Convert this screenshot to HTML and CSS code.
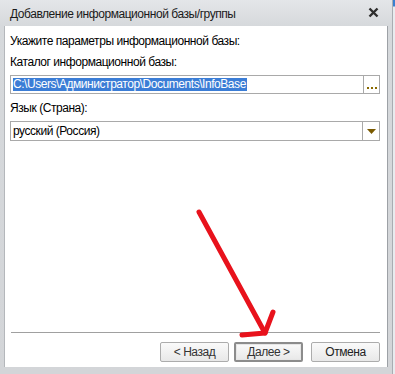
FILE: index.html
```html
<!DOCTYPE html>
<html lang="ru">
<head>
<meta charset="utf-8">
<link rel="stylesheet" href="styles.css">
</head>
<body>
<div class="screen">
  <div class="window">
    <div class="titlebar">
      <span class="title">Добавление информационной базы/группы</span>
      <svg class="close" width="11" height="11" viewBox="0 0 11 11"><path d="M1.5 1.5 L9.5 9.5 M9.5 1.5 L1.5 9.5" stroke="#2e2e2e" stroke-width="2.4"/></svg>
    </div>
    <div class="client">
      <div class="label first">Укажите параметры информационной базы:</div>
      <div class="label">Каталог информационной базы:</div>
      <div class="field">
        <div class="value"><span class="sel">C:\Users\Администратор\Documents\InfoBase</span></div>
        <div class="fbtn dots"><span></span><span></span><span></span></div>
      </div>
      <div class="label">Язык (Страна):</div>
      <div class="field combo">
        <div class="value">русский (Россия)</div>
        <div class="fbtn"><svg width="9" height="5" viewBox="0 0 9 5"><path d="M0 0 H9 L4.5 5 Z" fill="#7a5a00"/></svg></div>
      </div>
      <div class="spacer"></div>
      <div class="sep"></div>
      <div class="buttons">
        <div class="btn">&lt; Назад</div>
        <div class="btn default">Далее &gt;</div>
        <div class="btn cancel">Отмена</div>
      </div>
    </div>
  </div>
  <div class="side"></div>
  <svg class="arrow" width="395" height="374" viewBox="0 0 395 374">
    <g stroke="#e8121c" stroke-width="5" stroke-linecap="round" stroke-linejoin="round" fill="none">
      <path d="M199 212 L265 333"/>
      <path d="M273 312 L265 333 L242 335"/>
    </g>
  </svg>
</div>
</body>
</html>
```
FILE: styles.css
```css
html, body {
  margin: 0;
  padding: 0;
}
body {
  width: 395px;
  height: 374px;
  overflow: hidden;
  font-family: "Liberation Sans", Arial, sans-serif;
  font-size: 12px;
  letter-spacing: -0.45px;
  color: #000;
}
.screen {
  position: relative;
  display: flex;
  width: 395px;
  height: 374px;
  background: #c9cdd2;
}
.window {
  width: 393px;
  height: 374px;
  box-sizing: border-box;
  padding: 0 4px 7px 5px;
  display: flex;
  flex-direction: column;
  background: linear-gradient(to bottom, #e4e6e9 0px, #d6d9dc 26px, #d3d5d8 100%);
  border-right: 1px solid #a9adb2;
}
.side {
  flex: 1;
  background: linear-gradient(to bottom, #3a7fd0 0px, #3a7fd0 6px, #e9ebee 7px, #e9ebee 100%);
}
.titlebar {
  height: 26px;
  display: flex;
  align-items: center;
  justify-content: space-between;
  padding: 0 9px 0 5px;
  box-sizing: border-box;
}
.title {
  font-size: 12px;
  color: #1a1a1a;
  margin-top: 1px;
}
.close {
  margin-top: -1px;
}
.client {
  flex: 1;
  background: #fff;
  display: flex;
  flex-direction: column;
  padding: 0 7px 5px 5px;
  border-left: 1px solid #b4b7bb;
  margin-left: -1px;
  border-right: 1px solid #9da1a6;
}
.label {
  height: 14px;
  line-height: 14px;
  margin-top: 7px;
  white-space: nowrap;
}
.label.first {
  margin-top: 8px;
}
.field {
  margin-top: 6px;
  height: 19px;
  box-sizing: border-box;
  border: 1px solid #a9a9a9;
  display: flex;
}
.field.combo {
  height: 20px;
}
.value {
  flex: 1;
  display: flex;
  align-items: center;
  padding-left: 2px;
  white-space: nowrap;
  overflow: hidden;
}
.sel {
  background: #3b7dd6;
  color: #fff;
  line-height: 13px;
  padding-right: 1px;
}
.fbtn {
  width: 16px;
  border-left: 1px solid #a9a9a9;
  display: flex;
  align-items: center;
  justify-content: center;
}
.dots {
  align-items: flex-end;
  gap: 2px;
  padding-bottom: 4px;
  box-sizing: border-box;
}
.dots span {
  width: 2px;
  height: 2px;
  background: #8a6a00;
}
.spacer {
  flex: 1;
}
.sep {
  height: 1px;
  background: #a0a0a0;
  margin-left: 1px;
}
.buttons {
  display: flex;
  justify-content: flex-end;
  gap: 5px;
  margin-top: 9px;
}
.btn {
  width: 69px;
  height: 20px;
  box-sizing: border-box;
  border: 1px solid #acacac;
  border-radius: 2px;
  background: linear-gradient(to bottom, #fafafa, #e8e8e8);
  display: flex;
  align-items: center;
  justify-content: center;
  color: #333;
  font-size: 12px;
}
.btn.default {
  border: 2px solid #8c8c8c;
  box-shadow: inset 0 0 0 1px #e6e6e6;
}
.btn.cancel {
  margin-left: 3px;
  color: #222;
}
.arrow {
  position: absolute;
  left: 0;
  top: 0;
  pointer-events: none;
}
```
